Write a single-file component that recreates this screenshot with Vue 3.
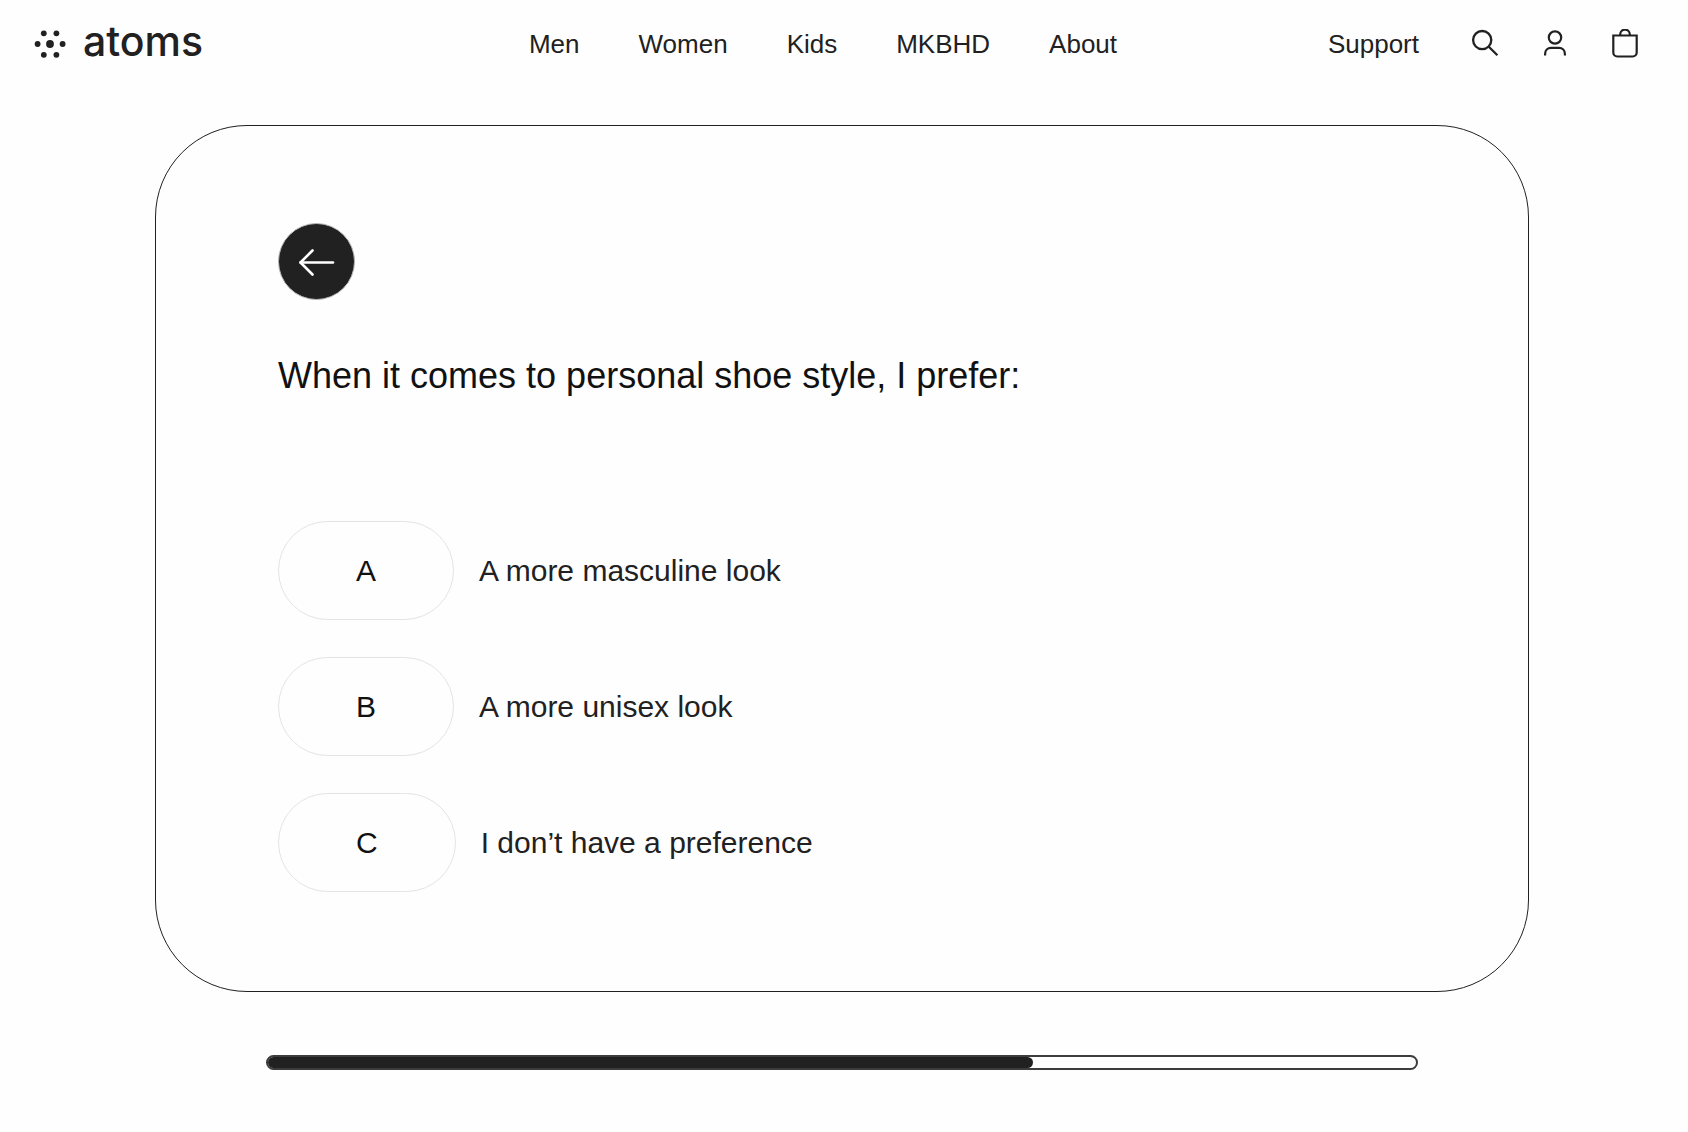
<script setup>
import { ref } from 'vue'

const links = ['Men', 'Women', 'Kids', 'MKBHD', 'About']

const options = [
  { key: 'A', text: 'A more masculine look' },
  { key: 'B', text: 'A more unisex look' },
  { key: 'C', text: 'I don’t have a preference' }
]

const step = ref(4)
const totalSteps = 6
const selected = ref(null)

const choose = (key) => {
  selected.value = key
}

const goBack = () => {
  if (step.value > 1) step.value--
}
</script>

<template>
  <div class="page">
    <header class="header">
      <a href="#" class="logo">
        <svg class="logo-mark" viewBox="0 0 32 32" width="32" height="32" fill="currentColor" aria-hidden="true">
          <circle cx="16" cy="16" r="3.9" />
          <circle cx="3.6" cy="16" r="2.9" />
          <circle cx="28.6" cy="16" r="2.9" />
          <circle cx="9.8" cy="5.3" r="2.9" />
          <circle cx="22.4" cy="5.3" r="2.9" />
          <circle cx="9.8" cy="26.8" r="2.9" />
          <circle cx="22.4" cy="26.8" r="2.9" />
        </svg>
        <span class="logo-text">atoms</span>
      </a>

      <nav class="nav">
        <a v-for="link in links" :key="link" href="#">{{ link }}</a>
      </nav>

      <div class="tools">
        <a href="#" class="support">Support</a>
        <button type="button" class="icon-btn" aria-label="Search">
          <svg viewBox="0 0 30 30" width="30" height="30" fill="none" stroke="currentColor" stroke-width="2.3">
            <circle cx="12.2" cy="11.1" r="9.1" />
            <path d="M18.8 17.7 27.4 26.2" />
          </svg>
        </button>
        <button type="button" class="icon-btn" aria-label="Account">
          <svg viewBox="0 0 30 30" width="30" height="30" fill="none" stroke="currentColor" stroke-width="2.2">
            <circle cx="15" cy="8.5" r="6.2" />
            <path d="M5.1 26.4v-1.4c0-3.8 2.5-6.2 6-6.2h7.8c3.5 0 6 2.4 6 6.2v1.4" />
          </svg>
        </button>
        <button type="button" class="icon-btn" aria-label="Cart">
          <svg viewBox="0 0 30 30" width="30" height="30" fill="none" stroke="currentColor" stroke-width="2.2">
            <path d="M3.3 6.5h23.4v17a4 4 0 0 1-4 4H7.3a4 4 0 0 1-4-4z" />
            <path d="M10.2 6.5V5.4a4.8 4.8 0 0 1 9.6 0v1.1" />
          </svg>
        </button>
      </div>
    </header>

    <main class="quiz">
      <section class="card">
        <button type="button" class="back" aria-label="Back" @click="goBack">
          <svg viewBox="0 0 40 32" width="40" height="32" fill="none" stroke="currentColor" stroke-width="2.6" stroke-linecap="round" stroke-linejoin="round">
            <path d="M36 16.500H3.500" />
            <path d="M15.500 4.500 3.500 16.500l12 12" />
          </svg>
        </button>

        <h1 class="question">When it comes to personal shoe style, I prefer:</h1>

        <div class="options">
          <button
            v-for="option in options"
            :key="option.key"
            type="button"
            class="option"
            :class="{ selected: selected === option.key }"
            @click="choose(option.key)"
          >
            <span class="pill">{{ option.key }}</span>
            <span>{{ option.text }}</span>
          </button>
        </div>
      </section>

      <div class="progress" role="progressbar" aria-label="Quiz progress" :aria-valuenow="step" aria-valuemin="0" :aria-valuemax="totalSteps">
        <div class="progress-fill" :style="{ width: (step / totalSteps) * 100 + '%' }"></div>
      </div>
    </main>
  </div>
</template>

<style>
body {
  margin: 0;
  background: #fefefe;
}
</style>

<style scoped>
.page {
  font-family: 'Liberation Sans', Arial, sans-serif;
  color: #212121;
}

.page * {
  box-sizing: border-box;
}

a {
  color: inherit;
  text-decoration: none;
}

button {
  padding: 0;
  border: 0;
  background: none;
  font: inherit;
  color: inherit;
  cursor: pointer;
}

.header {
  display: grid;
  grid-template-columns: 1fr auto 1fr;
  align-items: center;
  height: 85px;
  padding: 0 48px 0 34px;
}

.logo {
  display: flex;
  align-items: center;
  gap: 17px;
  padding-top: 3px;
}

.logo-mark {
  display: block;
}

.logo-text {
  font-family: Inter, 'Liberation Sans', sans-serif;
  font-size: 41px;
  font-weight: 500;
  line-height: 48px;
  padding-bottom: 6px;
}

.nav {
  display: flex;
  gap: 59px;
  padding: 2px 28px 0 0;
  font-size: 26px;
  line-height: 32px;
}

.tools {
  display: flex;
  align-items: center;
  justify-content: flex-end;
  gap: 40px;
  padding-top: 2px;
  font-size: 26px;
  line-height: 32px;
}

.support {
  margin-right: 11px;
}

.icon-btn svg {
  display: block;
}

.quiz {
  padding: 40px 159px 62px 155px;
}

.card {
  padding: 97px 122px 99px;
  border: 1px solid #212121;
  border-radius: 92px;
}

.back {
  display: flex;
  align-items: center;
  justify-content: center;
  width: 77px;
  height: 77px;
  border: 1px solid #b8b8b8;
  border-radius: 50%;
  background: #212121;
  color: #fff;
}

.question {
  margin: 51px 0 120px;
  font-size: 36px;
  font-weight: 400;
  line-height: 50px;
  color: #111;
}

.options {
  display: flex;
  flex-direction: column;
  align-items: flex-start;
  gap: 37px;
}

.option {
  display: flex;
  align-items: center;
  gap: 25px;
  font-size: 30px;
  line-height: 35px;
  text-align: left;
}

.pill {
  padding: 31px 77px;
  border: 1px solid #e4e4e4;
  border-radius: 50px;
  color: #111;
}

.option:hover .pill,
.option.selected .pill {
  border-color: #212121;
}

.progress {
  height: 15px;
  margin: 63px 111px 0;
  border: 2px solid #3c3c3c;
  border-radius: 8px;
}

.progress-fill {
  height: 100%;
  border-radius: 6px;
  background: #212121;
}
</style>
